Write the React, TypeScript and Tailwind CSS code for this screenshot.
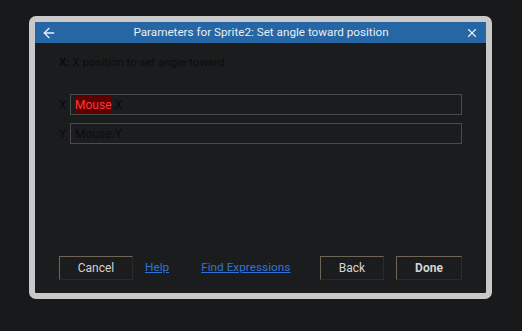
import { ArrowLeft, X } from "lucide-react";

function DialogButton({ label, bold }: { label: string; bold?: boolean }) {
  return (
    <button
      className={`h-[24px] w-full border border-t-[#6e6555] border-l-[#6e6555] border-r-[#2c2b29] border-b-[#2c2b29] bg-[#1b1c1e] text-[12px] text-[#d4d4d4] ${bold ? "font-bold" : ""}`}
    >
      {label}
    </button>
  );
}

export default function App() {
  return (
    <div
      className="h-[331px] w-[522px] bg-[#18191b] pl-[29px] pt-[16px]"
      style={{ fontFamily: "Roboto, 'Liberation Sans', sans-serif" }}
    >
      <div className="flex h-[283px] w-[463px] flex-col rounded-[7px] border-[6px] border-[#c9c9c9] bg-[#1b1c1e]">
        <header className="flex h-[21px] shrink-0 items-center justify-between bg-[#2666a4] px-[6px] text-[#e8eef5]">
          <ArrowLeft size={16} strokeWidth={2} />
          <span className="text-[11.7px]">Parameters for Sprite2: Set angle toward position</span>
          <X size={14} strokeWidth={2} className="mr-[1px]" />
        </header>

        <div className="flex flex-1 flex-col px-[24px] pt-[12px] pb-[13px]">
          <p className="text-[11.5px] leading-[14px] text-[#0c0c0c]">
            <span className="font-bold">X:</span> X position to set angle toward.
          </p>

          <div className="mt-[25px] flex flex-col gap-[8px]">
            <div className="flex items-center">
              <span className="w-[11px] text-[12px] text-[#0c0c0c]">X</span>
              <div className="flex h-[21px] flex-1 items-center border border-[#4a4a4a] pl-[4px] text-[12px] text-[#0c0c0c]">
                <span className="bg-[#5c0000] text-[#ff3838]">Mouse</span>.X
              </div>
            </div>
            <div className="flex items-center">
              <span className="w-[11px] text-[12px] text-[#0c0c0c]">Y</span>
              <div className="flex h-[21px] flex-1 items-center border border-[#4a4a4a] pl-[4px] text-[12px] text-[#0c0c0c]">
                Mouse.Y
              </div>
            </div>
          </div>

          <div className="mt-auto flex items-center">
            <div className="w-[74px]">
              <DialogButton label="Cancel" />
            </div>
            <a className="ml-[12px] text-[11.8px] text-[#2f74d6] underline">Help</a>
            <a className="ml-[32px] text-[11.8px] text-[#2f74d6] underline">Find Expressions</a>
            <div className="ml-auto flex gap-[12px]">
              <div className="w-[64px]">
                <DialogButton label="Back" />
              </div>
              <div className="w-[66px]">
                <DialogButton label="Done" bold />
              </div>
            </div>
          </div>
        </div>
      </div>
    </div>
  );
}
